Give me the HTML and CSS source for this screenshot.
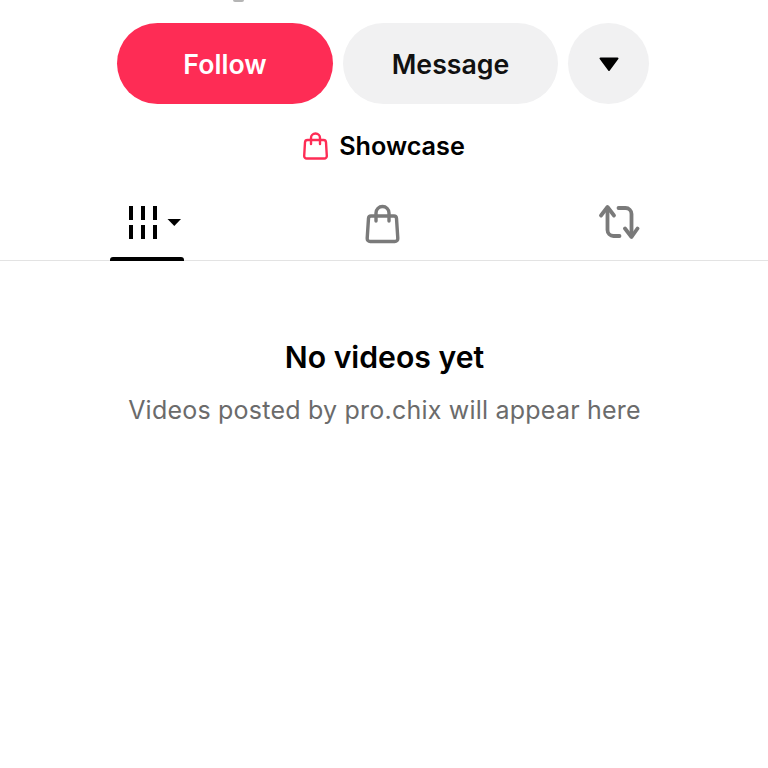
FILE: index.html
```html
<!DOCTYPE html>
<html lang="en">
<head>
  <meta charset="UTF-8">
  <title>pro.chix</title>
  <link rel="stylesheet" href="styles.css">
</head>
<body>
  <div class="top-sliver"></div>

  <div class="actions">
    <button class="btn btn-follow">Follow</button>
    <button class="btn btn-message">Message</button>
    <button class="btn btn-more" aria-label="More">
      <svg width="20" height="16" viewBox="0 0 20 16"><path d="M1.500 1.500h17a1 1 0 0 1 .8 1.600l-8.500 11.300a1 1 0 0 1-1.600 0L.7 3.100a1 1 0 0 1 .8-1.600z" fill="#000"/></svg>
    </button>
  </div>

  <div class="showcase">
    <svg width="25" height="28" viewBox="0 0 25 28" fill="none" stroke="#fe2c55" stroke-width="2.400" stroke-linejoin="round" stroke-linecap="round">
      <path d="M4.500 8h16a2.500 2.500 0 0 1 2.500 2.300l.8 13.500a2.500 2.500 0 0 1-2.500 2.700H3.700a2.500 2.500 0 0 1-2.500-2.700L2 10.300A2.500 2.500 0 0 1 4.500 8z"/>
      <path d="M8 12V6a4.500 4.500 0 0 1 9 0v6"/>
    </svg>
    <span>Showcase</span>
  </div>

  <nav class="tabs">
    <div class="tab tab-active">
      <svg width="52" height="36" viewBox="0 0 52 36" fill="#000">
        <rect x="0" y="2" width="4" height="14"/><rect x="12" y="2" width="4" height="14"/><rect x="24" y="2" width="4" height="14"/>
        <rect x="0" y="21" width="4" height="14"/><rect x="12" y="21" width="4" height="14"/><rect x="24" y="21" width="4" height="14"/>
        <path d="M38.500 15h13.500l-6.700 7z"/>
      </svg>
    </div>
    <div class="tab">
      <svg width="36" height="40" viewBox="0 0 36 40" fill="none" stroke="#7a7a7a" stroke-width="3.400" stroke-linejoin="round" stroke-linecap="round">
        <path d="M6 12h23a2.500 2.500 0 0 1 2.500 2.300l1.300 20a3 3 0 0 1-3 3.200H5.200a3 3 0 0 1-3-3.200l1.300-20A2.500 2.500 0 0 1 6 12z"/>
        <path d="M11 17V9a6.500 6.500 0 0 1 13 0v8"/>
      </svg>
    </div>
    <div class="tab">
      <svg width="42" height="36" viewBox="0 0 42 36" fill="none" stroke="#7a7a7a" stroke-width="3.800" stroke-linejoin="round" stroke-linecap="round">
        <path d="M3 11.500L9.500 3l6.500 8.500"/>
        <path d="M9.500 4v22a6 6 0 0 0 6 6h6"/>
        <path d="M39.500 24.500L33.500 33l-6.500-8.500"/>
        <path d="M33.500 32V10a6 6 0 0 0-6-6h-7"/>
      </svg>
    </div>
  </nav>

  <section class="empty">
    <h2>No videos yet</h2>
    <p>Videos posted by pro.chix will appear here</p>
  </section>
</body>
</html>
```

FILE: styles.css
```css
* {
  margin: 0;
  padding: 0;
  box-sizing: border-box;
}

body {
  background: #fff;
  color: #000;
  font-family: Inter, "Liberation Sans", sans-serif;
  height: 768px;
  overflow: hidden;
  position: relative;
}

/* descender of the line cut off by the top edge */
.top-sliver {
  position: absolute;
  top: 0;
  left: 233px;
  width: 11px;
  height: 2px;
  background: #b5b5b5;
  border-radius: 0 0 6px 6px;
}

.actions {
  display: flex;
  justify-content: center;
  gap: 10px;
  padding-top: 23px;
  padding-right: 2px;
}

.btn {
  height: 81px;
  width: 216px;
  border: none;
  border-radius: 41px;
  font-family: inherit;
  font-size: 26.700px;
  font-weight: 600;
  display: flex;
  align-items: center;
  justify-content: center;
}

.btn-follow {
  background: #fe2c55;
  color: #fff;
}

.btn-message {
  background: #f1f1f2;
  color: #111;
  width: 215px;
}

.btn-more {
  background: #f1f1f2;
  width: 81px;
}

.showcase {
  display: flex;
  justify-content: center;
  align-items: center;
  gap: 11px;
  margin-top: 27px;
  height: 30px;
  font-size: 25.200px;
  font-weight: 600;
}

.tabs {
  display: grid;
  grid-template-columns: repeat(3, 236px);
  justify-content: center;
  margin-top: 31px;
  height: 69px;
  border-bottom: 1px solid #e3e3e3;
  padding-right: 2px;
}

.tab {
  display: flex;
  justify-content: center;
  padding-top: 12px;
  position: relative;
}

.tab-active svg {
  margin-left: 16px;
}

.tab-active::after {
  content: "";
  position: absolute;
  left: 81px;
  bottom: -1px;
  width: 74px;
  height: 4px;
  background: #000;
  border-radius: 3px 3px 0 0;
}

.empty {
  text-align: center;
  margin-top: 77px;
  padding-left: 1px;
}

.empty h2 {
  font-size: 30.200px;
  font-weight: 600;
  line-height: 38px;
}

.empty p {
  margin-top: 18px;
  font-size: 25px;
  letter-spacing: 0.22px;
  line-height: 32px;
  color: #6b6b6b;
}
```
